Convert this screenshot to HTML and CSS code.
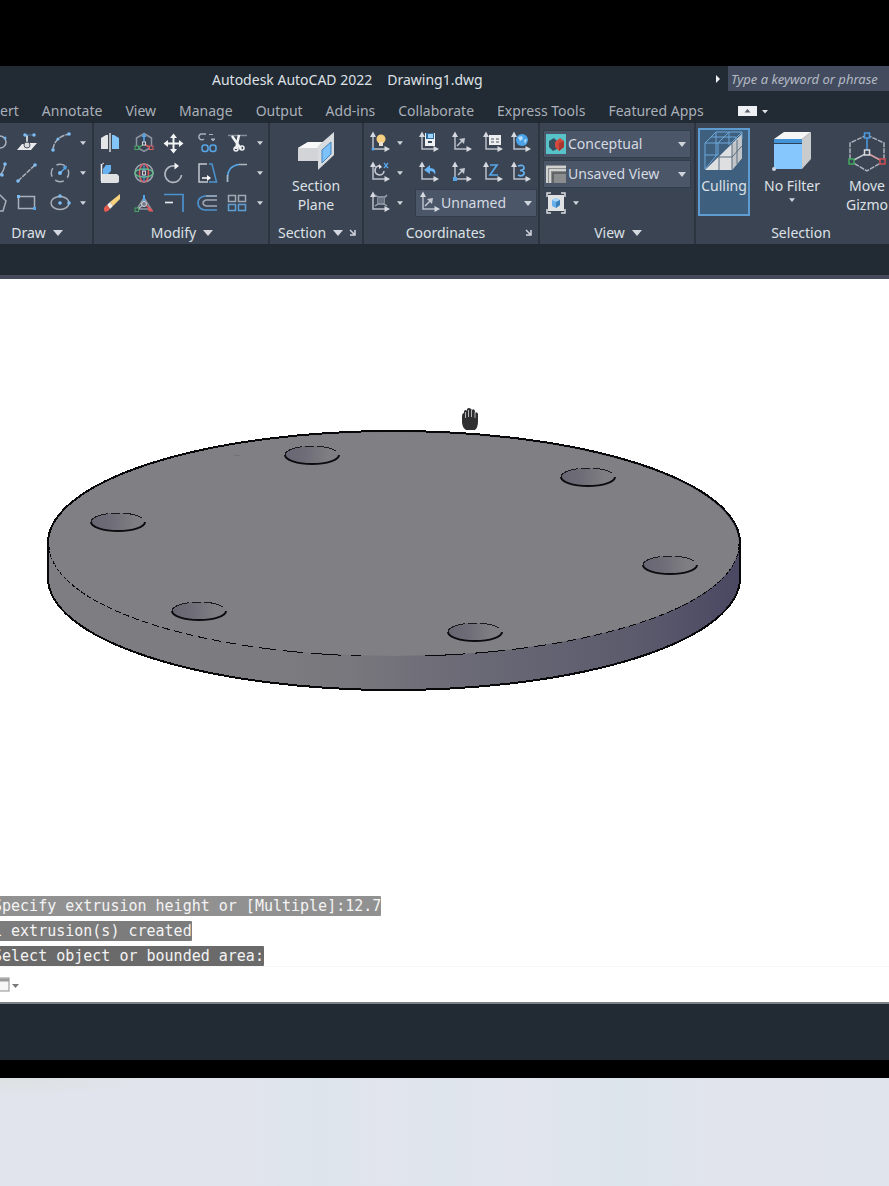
FILE: index.html
```html
<!DOCTYPE html>
<html lang="en">
<head>
<meta charset="utf-8">
<title>Autodesk AutoCAD 2022</title>
<link rel="stylesheet" href="styles.css">
</head>
<body>
<svg class="defs" aria-hidden="true">
  <symbol id="axis" viewBox="0 0 24 24">
    <path d="M6 5V18H18" fill="none" stroke="#b9bfc9" stroke-width="1.5"/>
    <path d="M6 0.500L9 6H3zM23 18L17.500 15V21z" fill="#d5d9df"/>
  </symbol>
</svg>
<main class="app">
  <header class="titlebar">
    <h1 class="title"><span>Autodesk AutoCAD 2022</span><span>Drawing1.dwg</span></h1>
    <button class="expand" aria-label="Expand search"><svg width="6" height="8"><path d="M1 0L5 4L1 8z" fill="#f0f2f5"/></svg></button>
    <input class="search" type="text" aria-label="Search" placeholder="Type a keyword or phrase">
  </header>

  <nav class="tabs">
    <a href="#insert">Insert</a><a href="#annotate">Annotate</a><a href="#view">View</a><a href="#manage">Manage</a><a href="#output">Output</a><a href="#addins">Add-ins</a><a href="#collaborate">Collaborate</a><a href="#express">Express Tools</a><a href="#featured">Featured Apps</a>
    <button class="minimize" aria-label="Minimize ribbon"><svg width="30" height="12"><rect x="0" y="1" width="19" height="10" fill="#eef0f3"/><path d="M6.500 7.500L9.500 4L12.500 7.500z" fill="#59606b"/><path d="M24 5H30L27 8.500z" fill="#dfe2e7"/></svg></button>
  </nav>

  <section class="ribbon">
    <section class="panel draw">
      <div class="tools draw-tools">
        <button aria-label="Polysolid"><svg class="ic" viewBox="0 0 24 24"><ellipse cx="12" cy="11" rx="6" ry="6" fill="none" stroke="#aab1bd" stroke-width="1.500"/><circle cx="17" cy="7" r="1.500" fill="#6fb4ef"/></svg></button>
        <button aria-label="Extrude"><svg class="ic" viewBox="0 0 24 24"><path d="M7 13L2 19H16L22 12H15V16H10V13z" fill="#e8eaec"/><path d="M12 4V15" stroke="#c7ccd3" stroke-width="2"/><circle cx="12" cy="14" r="3" fill="#d9dcdf" stroke="#4e5663"/><path d="M8 4H19" stroke="#4e7ba8"/><circle cx="10" cy="4" r="1.700" fill="#7dbdf5"/><circle cx="19" cy="4" r="1.700" fill="#7dbdf5"/></svg></button>
        <button aria-label="Arc"><svg class="ic" viewBox="0 0 24 24"><path d="M5 19Q6 6 21 3" fill="none" stroke="#a9b0bb" stroke-width="1.500" stroke-dasharray="6 1"/><circle cx="5" cy="19" r="1.800" fill="#7dbdf5"/><circle cx="10" cy="8" r="1.500" fill="#7dbdf5"/><circle cx="21" cy="3" r="1.800" fill="#7dbdf5"/></svg></button>
        <button aria-label="Arc options"><svg class="dd sm" viewBox="0 0 8 5"><path d="M0 0H8L4 5z"/></svg></button>

        <button aria-label="Polyline"><svg class="ic" viewBox="0 0 24 24"><path d="M6 16Q15 16 17 3" fill="none" stroke="#a9b0bb" stroke-width="1.500"/><circle cx="14" cy="14" r="1.800" fill="#7dbdf5"/><circle cx="17" cy="3" r="1.800" fill="#7dbdf5"/></svg></button>
        <button aria-label="Line"><svg class="ic" viewBox="0 0 24 24"><path d="M3 20L20 4" stroke="#a9b0bb" stroke-width="1.500" stroke-dasharray="5 1"/><circle cx="3" cy="20" r="1.800" fill="#7dbdf5"/><circle cx="20" cy="4" r="1.800" fill="#7dbdf5"/></svg></button>
        <button aria-label="Circle"><svg class="ic" viewBox="0 0 24 24"><circle cx="12" cy="12" r="8.700" fill="none" stroke="#a9b0bb" stroke-width="1.500" stroke-dasharray="9 4.700" stroke-dashoffset="4"/><path d="M12 12L18 6" stroke="#57a6e8" stroke-width="1.500"/><circle cx="12" cy="12" r="2" fill="#7dbdf5"/><path d="M19 4.500L18 9L14.500 6z" fill="#57a6e8"/></svg></button>
        <button aria-label="Circle options"><svg class="dd sm" viewBox="0 0 8 5"><path d="M0 0H8L4 5z"/></svg></button>

        <button aria-label="Polygon"><svg class="ic" viewBox="0 0 24 24"><path d="M8 5L12 4L18 10L15 20H6" fill="none" stroke="#a9b0bb" stroke-width="1.500"/></svg></button>
        <button aria-label="Rectangle"><svg class="ic" viewBox="0 0 24 24"><rect x="3.500" y="5.500" width="16" height="12" fill="none" stroke="#a9b0bb" stroke-width="1.500"/><rect x="2" y="4" width="3" height="3" fill="#7dbdf5"/><rect x="18" y="16" width="3" height="3" fill="#57a6e8"/></svg></button>
        <button aria-label="Ellipse"><svg class="ic" viewBox="0 0 24 24"><ellipse cx="12" cy="12" rx="9" ry="6.500" fill="none" stroke="#a9b0bb" stroke-width="1.500"/><circle cx="12" cy="12" r="1.800" fill="#7dbdf5"/><circle cx="12" cy="5" r="1.800" fill="#7dbdf5"/><circle cx="21" cy="12" r="1.800" fill="#7dbdf5"/></svg></button>
        <button aria-label="Ellipse options"><svg class="dd sm" viewBox="0 0 8 5"><path d="M0 0H8L4 5z"/></svg></button>
      </div>
      <h2 class="caption">Draw <svg class="cd" viewBox="0 0 10 6"><path d="M0 0H10L5 6z"/></svg></h2>
    </section>

    <section class="panel modify">
      <div class="tools modify-tools">
        <button aria-label="3D Mirror"><svg class="ic" viewBox="0 0 24 24"><path d="M3 7L8 4H10V18H3z" fill="#e3e5e7"/><path d="M14 4H16L21 7V18H14z" fill="#82c5fb"/><path d="M12 2V21" stroke="#d7dade" stroke-width="1.500"/></svg></button>
        <button aria-label="3D Move"><svg class="ic" viewBox="0 0 24 24"><path d="M12 2.500L19.500 7V16L12 20.500L4.500 16V7z" fill="none" stroke="#8d95a2" stroke-width="1.500"/><path d="M12 5V13" stroke="#57a6e8" stroke-width="1.500"/><path d="M12 2L14.500 6H9.500z" fill="#57a6e8"/><path d="M12 13L6 17" stroke="#49a666" stroke-width="1.500"/><path d="M12 13L19 17" stroke="#dd5c60" stroke-width="1.500"/><rect x="10.500" y="11" width="3" height="3" fill="#3b4453" stroke="#cfd3d9"/><rect x="3" y="15" width="3.500" height="3.500" fill="#3b4453" stroke="#49a666"/><rect x="17.500" y="15" width="3.500" height="3.500" fill="#3b4453" stroke="#dd5c60"/></svg></button>
        <button aria-label="Move"><svg class="ic" viewBox="0 0 24 24"><path d="M12.500 4V21M4 12.500H21" stroke="#f2f3f5" stroke-width="2"/><path d="M12.500 2.500L16 7H9zM12.500 22.500L16 18H9zM2.500 12.500L7 9V16zM22.500 12.500L18 9V16z" fill="#f2f3f5"/></svg></button>
        <button aria-label="Copy"><svg class="ic" viewBox="0 0 24 24"><path d="M11 3H6A3 3 0 1 0 9 8" fill="none" stroke="#a9b0bb" stroke-width="1.500"/><path d="M14 3.500H18M16 8H20L18 10z" fill="#a9b0bb" stroke="#a9b0bb"/><rect x="7" y="14" width="6" height="6.500" rx="2.500" fill="none" stroke="#57a6e8" stroke-width="1.500"/><rect x="15" y="14" width="6" height="6.500" rx="2.500" fill="none" stroke="#57a6e8" stroke-width="1.500"/></svg></button>
        <button aria-label="Trim"><svg class="ic" viewBox="0 0 24 24"><path d="M3 4.500H22" stroke="#858d99" stroke-width="1.500"/><path d="M7 5L16 18M14 4L11 18" stroke="#f0f1f3" stroke-width="2.500"/><circle cx="11" cy="18" r="2" fill="none" stroke="#f0f1f3" stroke-width="1.500"/><circle cx="17" cy="17" r="2" fill="none" stroke="#f0f1f3" stroke-width="1.500"/></svg></button>
        <button aria-label="Trim options"><svg class="dd sm" viewBox="0 0 8 5"><path d="M0 0H8L4 5z"/></svg></button>

        <button aria-label="3D Align"><svg class="ic" viewBox="0 0 24 24"><path d="M3 13H19L21 15V21L19 22H3z" fill="#dfe1e3"/><path d="M3 4L6 2" stroke="#e9eaec"/><path d="M3.500 3V20" stroke="#f2f2f2" stroke-width="1.500"/><path d="M5 8L8 4H13V10L10 13H5z" fill="#67b3f2"/></svg></button>
        <button aria-label="3D Rotate"><svg class="ic" viewBox="0 0 24 24"><circle cx="12" cy="12" r="9" fill="none" stroke="#9aa2ae" stroke-width="1.500"/><ellipse cx="12" cy="12" rx="4.500" ry="9" fill="none" stroke="#dd5c60" stroke-width="1.500"/><ellipse cx="12" cy="12" rx="9" ry="4" fill="none" stroke="#5fb98a" stroke-width="1.500"/><path d="M12 3V21" stroke="#57a6e8"/><rect x="10.500" y="10" width="3" height="4" fill="#59424e" stroke="#cfd3d9"/></svg></button>
        <button aria-label="Rotate"><svg class="ic" viewBox="0 0 24 24"><path d="M14 5A8.300 8.300 0 1 0 20.500 14" fill="none" stroke="#b3b9c3" stroke-width="1.700"/><path d="M13.500 1.500L18 5L13.500 8.500z" fill="#f2f3f5"/></svg></button>
        <button aria-label="Stretch"><svg class="ic" viewBox="0 0 24 24"><path d="M12 3H4V21H13" fill="none" stroke="#c3c8d0" stroke-width="1.500"/><path d="M14 3H17L21.500 21H14" fill="none" stroke="#4b92cf" stroke-width="1.500"/><path d="M7 17H13" stroke="#fff" stroke-width="1.500"/><path d="M16 17L12 14V20z" fill="#fff"/></svg></button>
        <button aria-label="Fillet"><svg class="ic" viewBox="0 0 24 24"><path d="M2.500 21V16Q3 5 14 3.500" fill="none" stroke="#57a6e8" stroke-width="1.500"/><path d="M2.500 21V14M14 3.500H22" stroke="#b0b6c0" stroke-width="1.500"/></svg></button>
        <button aria-label="Fillet options"><svg class="dd sm" viewBox="0 0 8 5"><path d="M0 0H8L4 5z"/></svg></button>

        <button aria-label="Erase"><svg class="ic" viewBox="0 0 24 24"><path d="M22 3L12 11L15 15L22 8z" fill="#f7d27d"/><path d="M12 11L9 14L12 18L15 15z" fill="#f3eee4"/><path d="M9 14Q4 17 7 21Q10 21 12 18z" fill="#e8594f"/></svg></button>
        <button aria-label="3D Scale"><svg class="ic" viewBox="0 0 24 24"><path d="M12 7L5 18H19z" fill="none" stroke="#8d95a2" stroke-width="1.500"/><path d="M12 4V13" stroke="#57a6e8" stroke-width="2"/><path d="M12 13L5 19" stroke="#b8bdc5" stroke-width="1.500"/><path d="M12 13L20 19" stroke="#dd5c60" stroke-width="1.500"/><rect x="3" y="17" width="3.500" height="3.500" fill="#3b4453" stroke="#49a666"/><path d="M16 17L21 20H17z" fill="#dd5c60" stroke="#dd5c60"/><circle cx="12" cy="13" r="2.500" fill="#737b88" stroke="#d5d8dd"/></svg></button>
        <button aria-label="Offset corner"><svg class="ic" viewBox="0 0 24 24"><path d="M3 3.500H22V21" fill="none" stroke="#4b92cf" stroke-width="1.700"/><path d="M4 11.500H12" stroke="#e3e6ea" stroke-width="1.700"/></svg></button>
        <button aria-label="Offset"><svg class="ic" viewBox="0 0 24 24"><path d="M22 5H10Q3 6 3 12Q3 18 10 19H22" fill="none" stroke="#4b92cf" stroke-width="1.700"/><path d="M22 5H11M22 9H11Q8 10 8 12Q8 14 11 15H22" fill="none" stroke="#a0a8b4" stroke-width="1.500"/></svg></button>
        <button aria-label="Array"><svg class="ic" viewBox="0 0 24 24"><g fill="none" stroke-width="1.500"><path d="M3.500 4.500H10.500V10.500H3.500zM13.500 4.500H20.500V10.500H13.500z" stroke="#a0a8b4"/><path d="M3.500 13.500H10.500V19.500H3.500zM13.500 13.500H20.500V19.500H13.500z" stroke="#5f9fd6"/></g></svg></button>
        <button aria-label="Array options"><svg class="dd sm" viewBox="0 0 8 5"><path d="M0 0H8L4 5z"/></svg></button>
      </div>
      <h2 class="caption">Modify <svg class="cd" viewBox="0 0 10 6"><path d="M0 0H10L5 6z"/></svg></h2>
    </section>

    <section class="panel section">
      <div class="tools">
        <button class="big"><svg width="40" height="42" viewBox="0 0 40 42"><path d="M2 16L12 10H24L22 16V29H2z" fill="#d2d4d7"/><path d="M12 10L2 16H21L28 10z" fill="#f8f8f8"/><path d="M22 14L38 0V23L22 38z" fill="#d8dcdf"/><path d="M26 18L35 10V22L26 31z" fill="#7dc1fb" stroke="#4583b8"/></svg><span>Section<br>Plane</span></button>
      </div>
      <h2 class="caption with-launcher"><span>Section <svg class="cd" viewBox="0 0 10 6"><path d="M0 0H10L5 6z"/></svg></span><button class="launcher" aria-label="Section settings"><svg width="8" height="8"><path d="M1 1L5 5M6 1V6H1" fill="none" stroke="#d3d7dd" stroke-width="1.500"/></svg></button></h2>
    </section>

    <section class="panel coords">
      <div class="tools coords-tools">
        <button aria-label="UCS icon"><svg class="ic" viewBox="0 0 24 24"><use href="#axis"/><circle cx="14" cy="8" r="4.500" fill="#f7cf80"/><rect x="12" y="11" width="4" height="4" fill="#e9e2d3"/><circle cx="6" cy="18" r="1.500" fill="#57a6e8"/></svg></button>
        <button aria-label="UCS icon options"><svg class="dd sm" viewBox="0 0 8 5"><path d="M0 0H8L4 5z"/></svg></button>
        <button aria-label="Named UCS"><svg class="ic" viewBox="0 0 24 24"><use href="#axis"/><rect x="9" y="2" width="10" height="13" fill="#eef1f4"/><rect x="10" y="2" width="8" height="6" fill="#2d6da3"/><rect x="12" y="3" width="5" height="4" fill="#9dd2fa"/><rect x="12" y="10" width="4" height="2" fill="#3b4453"/></svg></button>
        <button aria-label="UCS"><svg class="ic" viewBox="0 0 24 24"><use href="#axis"/><path d="M8 15L13 10" stroke="#c4c9d1" stroke-width="1.500"/><path d="M16 7L15 13L10 8z" fill="#c4c9d1"/></svg></button>
        <button aria-label="UCS face"><svg class="ic" viewBox="0 0 24 24"><use href="#axis"/><rect x="9" y="4" width="12" height="10" fill="#eceef0"/><path d="M11 8H14M16 8H19M11 11H14M16 11H19" stroke="#4b5361"/></svg></button>
        <button aria-label="UCS world"><svg class="ic" viewBox="0 0 24 24"><use href="#axis"/><circle cx="14" cy="9" r="6" fill="#4aa3e8"/><path d="M10 6L14 5L15 8L12 10zM16 9L19 8L17 13z" fill="#b5dcfa"/></svg></button>

        <button aria-label="Rotate UCS"><svg class="ic" viewBox="0 0 24 24"><use href="#axis"/><path d="M13 5A4.500 4.500 0 1 0 17 10" fill="none" stroke="#c4c9d1" stroke-width="1.700"/><path d="M12 3L15 6L12 8z" fill="#e6e8eb"/><path d="M17 2L21 7M21 2L17 7" stroke="#57a6e8" stroke-width="1.300"/></svg></button>
        <button aria-label="Rotate UCS options"><svg class="dd sm" viewBox="0 0 8 5"><path d="M0 0H8L4 5z"/></svg></button>
        <button aria-label="UCS previous"><svg class="ic" viewBox="0 0 24 24"><use href="#axis"/><path d="M14 4L8 9L14 13V10Q18 10 19 14Q21 7 14 7z" fill="#67b3f2"/></svg></button>
        <button aria-label="UCS origin"><svg class="ic" viewBox="0 0 24 24"><use href="#axis"/><path d="M9 14L14 9" stroke="#c4c9d1" stroke-width="1.500"/><path d="M16 7L15 13L10 8z" fill="#c4c9d1"/><rect x="4" y="16" width="4" height="4" fill="#57a6e8"/></svg></button>
        <button aria-label="Z-axis vector"><svg class="ic" viewBox="0 0 24 24"><use href="#axis"/><path d="M10 4H17L10 14H18" fill="none" stroke="#57a6e8" stroke-width="1.700"/></svg></button>
        <button aria-label="3-point UCS"><svg class="ic" viewBox="0 0 24 24"><use href="#axis"/><path d="M10 5Q16 3 16 7Q16 9 12 9.500Q17 10 16 13Q14 16 10 14" fill="none" stroke="#67b3f2" stroke-width="1.700"/></svg></button>

        <button aria-label="Align UCS"><svg class="ic" viewBox="0 0 24 24"><use href="#axis"/><path d="M8 4L11 6H18L20 4M8 15L11 13H17L20 15M11 7V13M17 7V13" fill="none" stroke="#9da5b1" stroke-width="1.500"/><path d="M11 7H17V12H11z" fill="#68717f"/></svg></button>
        <button aria-label="Align UCS options"><svg class="dd sm" viewBox="0 0 8 5"><path d="M0 0H8L4 5z"/></svg></button>
        <label class="combo wide"><svg class="ic" viewBox="0 0 24 24"><use href="#axis"/><path d="M8 15L13 10" stroke="#c4c9d1" stroke-width="1.500"/><path d="M16 7L15 13L10 8z" fill="#c4c9d1"/></svg><select aria-label="Named UCS combo"><option>Unnamed</option></select><svg class="dd" viewBox="0 0 8 5"><path d="M0 0H8L4 5z"/></svg></label>
      </div>
      <h2 class="caption with-launcher"><span>Coordinates</span><button class="launcher" aria-label="UCS settings"><svg width="8" height="8"><path d="M1 1L5 5M6 1V6H1" fill="none" stroke="#d3d7dd" stroke-width="1.500"/></svg></button></h2>
    </section>

    <section class="panel view">
      <div class="tools view-tools">
        <label class="combo"><svg width="20" height="20" viewBox="0 0 20 20"><rect width="20" height="20" fill="#57c3c9"/><path d="M3 7L8 4L11 7V15L7 17L3 13z" fill="#35505f"/><path d="M9 8L14 4L18 7V13L13 17L9 13z" fill="#d2493f"/><path d="M13 9L18 7V13L13 17z" fill="#a9362f"/></svg><select aria-label="Visual style"><option>Conceptual</option></select><svg class="dd" viewBox="0 0 8 5"><path d="M0 0H8L4 5z"/></svg></label>
        <label class="combo"><svg width="20" height="18" viewBox="0 0 20 18"><rect width="20" height="18" fill="#8b8c8d"/><path d="M1 18V2H20M4 18V5H20" fill="none" stroke="#e6e6e6" stroke-width="1.500"/><path d="M7 18V8H20" fill="none" stroke="#55585c" stroke-width="1.500"/></svg><select aria-label="Saved view"><option>Unsaved View</option></select><svg class="dd" viewBox="0 0 8 5"><path d="M0 0H8L4 5z"/></svg></label>
        <div class="view-row"><button aria-label="Viewport"><svg class="ic" viewBox="0 0 24 24"><rect x="4" y="4" width="16" height="16" fill="#dfe1e3"/><path d="M3 6V2H7M17 2H21V6M21 18V22H17M7 22H3V18" fill="none" stroke="#d9dcdf" stroke-width="1.500"/><path d="M8 9L12 7L16 9V14L12 17L8 15z" fill="#64aee9"/><path d="M8 9L12 7L16 9L12 11z" fill="#a9d5f8"/><path d="M12 11L16 9V14L12 17z" fill="#3c7fb8"/></svg></button><button aria-label="Viewport options"><svg class="dd sm" viewBox="0 0 8 5"><path d="M0 0H8L4 5z"/></svg></button></div>
      </div>
      <h2 class="caption">View <svg class="cd" viewBox="0 0 10 6"><path d="M0 0H10L5 6z"/></svg></h2>
    </section>

    <section class="panel selection">
      <div class="tools selection-tools">
        <button class="big culling" aria-pressed="true"><svg width="40" height="42" viewBox="0 0 40 42"><path d="M1 39L38 3V27L28 39z" fill="#dddfe1"/><path d="M28 14L38 3V27L28 39z" fill="#c2c5c8"/><g fill="none" stroke="#6ea8d8"><path d="M1 12H27L38 1M1 12V38M1 12L12 1H38V8M12 1V25L1 38M14 12V24M14 12L25 1V14M1 24H14M7 6H32V9"/></g><path d="M15 25V39M28 12V39M15 26H28L38 15M33 9V33" fill="none" stroke="#596c7e"/></svg><span>Culling</span></button>
        <button class="big filter"><svg width="40" height="42" viewBox="0 0 40 42"><path d="M2 8L12 1H39L30 8z" fill="#f6f6f6"/><path d="M30 8L39 1V28L30 38z" fill="#c9cbcd"/><path d="M2 8H30V12H2z" fill="#4394d6"/><path d="M2 13H30V38H2z" fill="#86c8fd"/><path d="M2 12.500H30" stroke="#2f4358"/><circle cx="2" cy="38" r="2" fill="#c9d4de"/></svg><span>No Filter</span><svg class="dd sm" viewBox="0 0 8 5"><path d="M0 0H8L4 5z"/></svg></button>
        <button class="big gizmo"><svg width="40" height="42" viewBox="0 0 40 42"><g fill="none" stroke="#aab1bc" stroke-width="1.500" stroke-dasharray="5 1"><path d="M20 4L37 12V30L20 40L3 30V12z"/></g><path d="M20 5V20" stroke="#4b9be0" stroke-width="1.500"/><path d="M20 22L5 30" stroke="#c0c5cd" stroke-width="1.500"/><path d="M20 22L35 30" stroke="#d9a3a5" stroke-width="1.500"/><g fill="#3b4453" stroke-width="1.500"><rect x="17.500" y="2" width="5" height="5" stroke="#4b9be0"/><rect x="17.500" y="19" width="5" height="5" stroke="#d7dade"/><rect x="2" y="28" width="5" height="5" stroke="#41a85f"/><rect x="33" y="28" width="5" height="5" stroke="#cf4f54"/></g></svg><span>Move<br>Gizmo</span></button>
      </div>
      <h2 class="caption">Selection</h2>
    </section>
  </section>

  <div class="filetabs"></div>

  <section class="viewport">
    <svg class="model" viewBox="0 279 889 600" role="img" aria-label="Circular plate with six holes">
      <defs>
        <linearGradient id="side" gradientUnits="userSpaceOnUse" x1="48" y1="0" x2="740" y2="0">
          <stop offset="0" stop-color="#7e7d81"/><stop offset="0.330" stop-color="#7c7b7f"/><stop offset="0.440" stop-color="#78777d"/><stop offset="0.600" stop-color="#6b6a76"/><stop offset="0.850" stop-color="#5c5b6d"/><stop offset="1" stop-color="#4a4862"/>
        </linearGradient>
        <linearGradient id="bore"><stop offset="0" stop-color="#676672"/><stop offset="0.350" stop-color="#6d6c77"/><stop offset="0.800" stop-color="#7f7e82"/></linearGradient>
      </defs>
      <path d="M48 543A346 112 0 0 1 740 543V578A346 112 0 0 1 48 578z" fill="url(#side)"/>
      <ellipse cx="394" cy="544" rx="345" ry="112" fill="#807f83"/>
      <g fill="none" stroke="#08080b" shape-rendering="crispEdges">
        <path d="M48 543A346 112 0 0 1 740 543V578A346 112 0 0 1 48 578z" stroke-width="2"/>
        <path d="M49 544A345 112 0 0 0 361 656" stroke-width="1" stroke-dasharray="2 1 3 1 2 1 3 1 2 2 3 1 3 2 3 1 4 2 3 2 4 2 4 2 4 2 5 2 5 2 5 3 6 2 6 3 6 3 6 3 7 3 7 4 7 4 8 4 8 4 8 5 9 5 9 5 10 6 12 6 17 7 20 8 30 10 50"/>
        <path d="M739 544A345 112 0 0 1 418 656" stroke-width="1" stroke-dasharray="2 1 3 1 2 1 3 1 2 2 3 1 3 2 3 1 4 2 3 2 4 2 4 2 4 2 5 2 5 2 5 3 6 2 6 3 6 3 6 3 7 3 7 4 7 4 8 4 8 4 8 5 9 5 9 5 10 6 12 6 17 7 30 10 40 10 50"/>
      </g>
      <g fill="url(#bore)" stroke="#1a1a1f" stroke-dasharray="80 3 9 3 20 4 9 3" shape-rendering="crispEdges">
        <ellipse cx="312" cy="455" rx="27" ry="9"/>
        <ellipse cx="118" cy="522" rx="27" ry="9"/>
        <ellipse cx="199" cy="611" rx="27" ry="9"/>
        <ellipse cx="588" cy="477" rx="27" ry="9"/>
        <ellipse cx="670" cy="565" rx="27" ry="9"/>
        <ellipse cx="475" cy="632" rx="27" ry="9"/>
      </g>
      <g fill="none" stroke="#0c0c10" stroke-width="2">
        <path d="M285 455A27 9 0 0 0 339 455"/>
        <path d="M91 522A27 9 0 0 0 145 522"/>
        <path d="M172 611A27 9 0 0 0 226 611"/>
        <path d="M561 477A27 9 0 0 0 615 477"/>
        <path d="M643 565A27 9 0 0 0 697 565"/>
        <path d="M448 632A27 9 0 0 0 502 632"/>
      </g>
      <path d="M234 455.500H240" stroke="#737277"/>
      <path d="M462 417Q462 413 464 413V411Q466 409 467 411V409Q469 407 471 409L472 410Q474 408 475 411V413Q477 411 478 414V422Q478 427 475 430H466Q462 427 462 422z" fill="#2f2f31"/>
      <path d="M465.500 412V418M468.500 410V417M471.500 410V417M475 412V418" stroke="#b5b5b7"/>
    </svg>
    <div class="history">
      <p class="line one">Specify extrusion height or [Multiple]:12.7</p>
      <p class="line two">1 extrusion(s) created</p>
      <p class="line three">Select object or bounded area:</p>
    </div>
    <div class="command"><button aria-label="Recent commands"><svg width="20" height="16" viewBox="0 0 20 16"><rect x="-6" y="1" width="15" height="13" fill="#f6f6f6" stroke="#8e8e8e"/><path d="M-6 3H9" stroke="#9a9a9a" stroke-width="3"/><path d="M12 7H19L15.500 11z" fill="#77797c"/></svg></button></div>
  </section>
  <footer class="status"></footer>
</main>
<div class="backdrop"></div>
</body>
</html>
```
FILE: styles.css
```css
* { box-sizing: border-box; }
body {
  margin: 0;
  min-height: 100vh;
  display: flex;
  flex-direction: column;
  overflow-x: hidden;
  background: #e1e5ed;
  font-family: "Noto Sans", "Open Sans", sans-serif;
  font-size: 14px;
  line-height: 20px;
  color: #dde1e6;
}
h1, h2, p { margin: 0; font: inherit; }
button {
  padding: 0;
  border: 0;
  background: none;
  color: inherit;
  font: inherit;
  display: block;
}
svg { display: block; flex: none; }
.defs { position: absolute; width: 0; height: 0; }

.app {
  background: #222a33;
  border-top: 66px solid #000;
  border-bottom: 18px solid #000;
  overflow: hidden;
}

.titlebar {
  display: flex;
  align-items: flex-start;
  height: 30px;
  padding-left: 212px;
}
.title {
  flex: 1;
  display: flex;
  gap: 15px;
  padding-top: 4px;
  white-space: nowrap;
}
.expand { margin: 9px 7px 0 0; }
.search {
  flex: none;
  width: 161px;
  height: 25px;
  padding: 0 0 0 3px;
  border: 0;
  border-radius: 0;
  background: #434c5e;
  color: #c3c8d1;
  font: italic 13px/20px "Noto Sans", "Open Sans", sans-serif;
}
.search::placeholder { color: #b4bac5; opacity: 1; }

.tabs {
  display: flex;
  align-items: center;
  gap: 23px;
  height: 27px;
  margin-left: -20px;
  padding-top: 3px;
  white-space: nowrap;
}
.tabs a { color: #a9b0b9; text-decoration: none; }
.minimize { margin-left: 11px; }

.ribbon {
  display: flex;
  height: 121px;
  margin-left: -20px;
  background: #3b4453;
}
.panel {
  flex: none;
  display: flex;
  flex-direction: column;
  border-right: 2px solid #2c3440;
}
.draw { width: 114px; }
.modify { width: 176px; }
.section { width: 94px; }
.coords { width: 176px; }
.view { width: 156px; }
.selection { flex: 1 0 208px; border: 0; }
.tools { height: 95px; padding-top: 5px; }
.caption {
  display: flex;
  align-items: center;
  justify-content: center;
  gap: 7px;
  height: 26px;
  padding: 3px 0 0 2px;
}
.caption span {
  flex: 1;
  display: flex;
  align-items: center;
  justify-content: center;
  gap: 7px;
}
.with-launcher { gap: 0; }
.launcher { width: 13px; }

.ic { width: 24px; height: 24px; }
.dd { width: 8px; height: 5px; margin: 0 2px; fill: #cfd4db; }
.dd.sm { width: 6px; height: 4px; margin: 0 3px; }
.cd { width: 10px; height: 6px; fill: #d5d9df; }

.draw-tools, .modify-tools, .coords-tools {
  display: grid;
  grid-auto-rows: 30px;
  align-items: center;
}
.draw-tools { grid-template-columns: 27px 33px 29px 12px; padding-left: 8px; }
.modify-tools { grid-template-columns: 34px 29px 34px 30px 29px 12px; padding-left: 4px; }
.coords-tools { grid-template-columns: 27px 22px 33px 31px 28px 24px; padding-left: 3px; }

.combo {
  display: flex;
  align-items: center;
  gap: 2px;
  height: 26px;
  padding: 0 2px;
  background: #4b5669;
  box-shadow: 0 0 0 1px #333c4a;
}
.combo select {
  flex: 1;
  min-width: 0;
  padding: 0;
  border: 0;
  background: none;
  color: #d5dae1;
  font: inherit;
  appearance: none;
}
.wide { grid-column: 3 / -1; width: 120px; gap: 0; padding-left: 1px; }

.view-tools {
  display: flex;
  flex-direction: column;
  gap: 4px;
  padding: 8px 4px 0 4px;
}
.view-row { display: flex; align-items: center; gap: 2px; }

.big {
  display: flex;
  flex-direction: column;
  align-items: center;
  text-align: center;
  line-height: 19px;
}
.section .big { margin: 4px auto 0; gap: 2px; }
.selection-tools { display: flex; align-items: flex-start; padding-left: 2px; }
.selection .big { height: 88px; padding-top: 3px; gap: 3px; }
.culling {
  width: 52px;
  background: #3f5f7e;
  box-shadow: inset 0 0 0 2px #5d9bd0;
}
.filter { width: 76px; margin-left: 4px; white-space: nowrap; }
.gizmo { width: 54px; margin-left: 10px; }

.filetabs {
  height: 35px;
  border-bottom: 4px solid #464b5b;
}
.viewport {
  background: #fff;
  border-bottom: 2px solid #7d8288;
}
.model { width: 100%; height: auto; }
.history {
  display: flex;
  flex-direction: column;
  align-items: flex-start;
  gap: 5px;
  margin: 17px 0 0 -7px;
  font: 15px/20px "DejaVu Sans Mono", "Liberation Mono", monospace;
  color: #f4f4f4;
  white-space: pre;
}
.line { border-radius: 1px; }
.one { background: #919191; }
.two { background: #7c7c7c; }
.three { background: #6a6a6a; }
.command {
  height: 36px;
  padding-top: 10px;
  border-top: 1px solid #f7f7f7;
}
.status { height: 56px; }

.backdrop {
  flex: 1;
  min-height: 108px;
  background:
    radial-gradient(ellipse at 0 0, #dde1e2, #dde1e200 160px),
    linear-gradient(90deg, #e1e4ec 0 28%, #dde5ec 36%, #e1e4ec 42%, #dfe5ec 50%, #e2e5ed 58%, #dce5eb 70%, #e1e4ec 80%, #e0e4ec);
}
```
